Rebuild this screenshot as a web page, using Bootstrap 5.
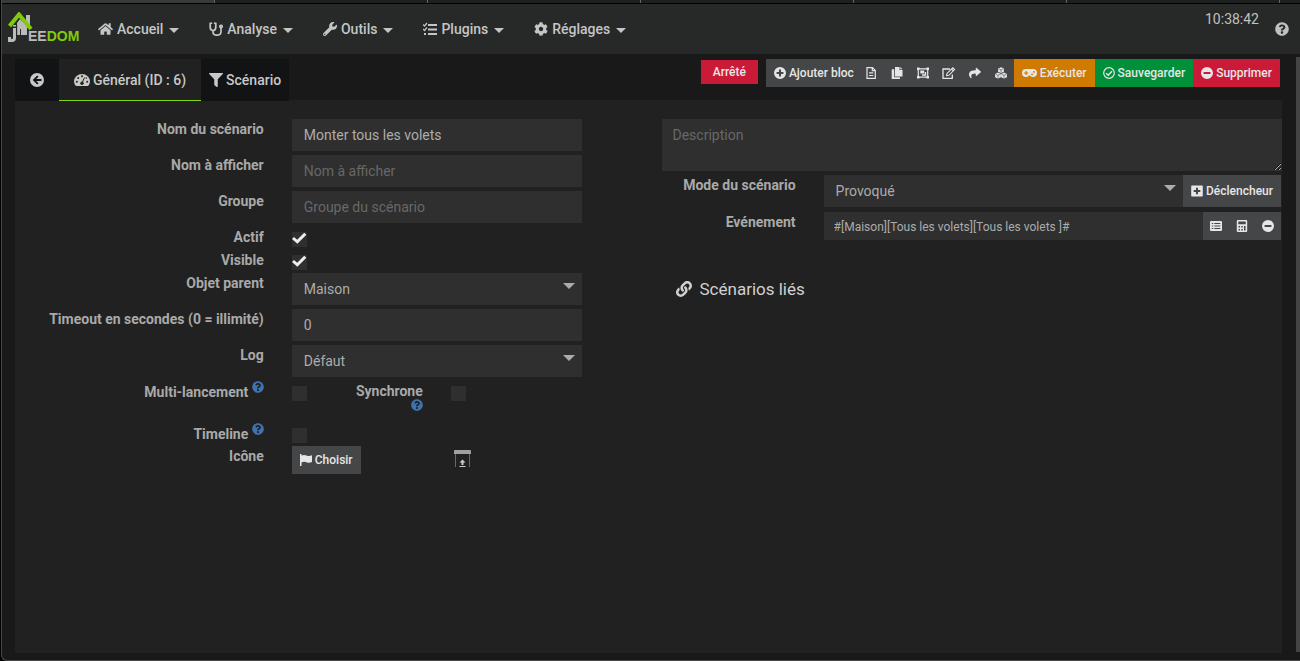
<!DOCTYPE html>
<html lang="fr">
<head>
<meta charset="utf-8">
<meta name="viewport" content="width=device-width, initial-scale=1">
<title>Jeedom - Scénario</title>
<link href="https://cdn.jsdelivr.net/npm/bootstrap@5.3.0/dist/css/bootstrap.min.css" rel="stylesheet">
<style>
body{background:#000;color:#c0c0c0;font-family:Roboto,"Liberation Sans",sans-serif;font-size:14px;line-height:20px;font-weight:500}
svg{fill:currentColor;flex:none}
.ic{width:14px;height:14px}
.ic12{width:12px;height:12px}
.stroke{fill:none;stroke:currentColor}
.window{min-height:100vh;background:#191919;border-left:1px solid #484848;border-bottom:1px solid #484848;border-bottom-left-radius:6px;margin-left:1px}
.strip{height:4px;background:#1e2020;border-bottom:1px solid #000}
.strip span{width:213px;border-right:1px solid #666;flex:none}
.strip span:first-child{background:#383a3a}
.topbar{height:50px;background:#272928;padding:0 11px 0 6px}
.topbar .nav-link{color:#c5c5c5;padding:0 15px;gap:4px;font-size:14px;font-weight:500}
.topbar .nav-link::after{margin-left:2px;margin-top:2px;border-top:5px solid;border-left:5px solid transparent;border-right:5px solid transparent;vertical-align:0}
.clock{font-size:14px;font-weight:400;padding-bottom:20px}
.page-main{padding:5px 18px 7px 13px}
.tabs-row{height:41px;padding-right:2px}
.tabs-row .nav-link{height:42px;background:#111315;color:#c8c8c8;border-radius:0;padding:0 8px;gap:3px;position:relative;z-index:1;font-size:14px;font-weight:500}
.tabs-row .nav-link.active{background:#212121;border-bottom:1px solid #84d41c;padding:0 15px}
.tabs-row .back{padding:0 15px}
.btn{--bs-btn-font-size:12px;--bs-btn-line-height:20px;--bs-btn-font-weight:500;--bs-btn-border-radius:0;--bs-btn-border-width:0;--bs-btn-color:#e6e6e6;--bs-btn-padding-x:8px;--bs-btn-padding-y:4px;--bs-btn-bg:#454648;display:inline-flex;align-items:center;gap:3px;white-space:nowrap}
.btn.add{padding-right:4px}
.btn-tool{width:26px;height:28px;padding:0;justify-content:center;flex:none}
.bg-run{background:#cf7a00}.bg-save{background:#00903a}.bg-del{background:#cb1a37}
.state{background:#cb1a37;color:#e8e8e8;font-size:12px;font-weight:500;line-height:24px;width:57px;height:24px;margin-top:1px}
.panel{background:#212121;padding-top:19px}
.half-l{width:50%;padding-right:67px}
.half-r{width:50%;padding-left:13px}
.line-l,.line-r{display:grid;column-gap:28px;margin-bottom:4px}
.line-l{grid-template-columns:249fr 290fr}
.line-r{grid-template-columns:134fr 457fr;padding-right:1px;margin-bottom:5px}
.line-l>label,.line-l>.lab,.line-r>label,.line-r>.lab,.sync label{text-align:right;font-weight:700;color:#a9a9a9}
.line-check{height:19px}
.line-tall{height:38px}
.field{background-color:#2f2f2f;border:0;border-radius:0;color:#acacac;font-size:14px;line-height:20px;font-weight:400;padding:6px 12px;height:32px;width:100%;outline:0}
.field::placeholder{color:#686868;opacity:1}
select.field{appearance:none}
.pick{position:relative;flex:1}
.pick::after{content:"";position:absolute;right:7px;top:10px;border-top:6px solid #acacac;border-left:6px solid transparent;border-right:6px solid transparent;pointer-events:none}
textarea.field{height:52px;padding:6px 11px;display:block;margin-bottom:4px;resize:vertical}
.tick{appearance:none;width:15px;height:15px;background:#2f2f2f;margin:5px 0 0;display:block;flex:none}
.tick:checked{background:#2f2f2f url("data:image/svg+xml,%3Csvg xmlns='http://www.w3.org/2000/svg' viewBox='0 0 15 15'%3E%3Cpath d='M1 6L5.3 9.8L13.3 1.800' fill='none' stroke='%23eee' stroke-width='3'/%3E%3C/svg%3E")}
.hint{color:#3f73ae;width:12px;height:12px;vertical-align:4px}
.sync label{width:67px;margin-left:49px;margin-right:28px}
.sync .hint{display:block;margin:-2px 0 0 auto}
.choose{width:180px}
.event{font-size:12px;height:28px;padding:5px 10px 3px}
.linked{font-size:17px;font-weight:400;color:#d0d0d0;margin:39px 0 0 14px;gap:8px}
.scroller{position:fixed;right:0;top:57px;bottom:9px;width:4px;background:#444}
</style>
</head>
<body>
<svg class="d-none">
<symbol id="help" viewBox="0 0 512 512"><path d="M504 256c0 136.997-111.043 248-248 248S8 392.997 8 256C8 119.083 119.043 8 256 8s248 111.083 248 248zM262.655 90c-54.497 0-89.255 22.957-116.549 63.758-3.536 5.286-2.353 12.415 2.715 16.258l34.699 26.31c5.205 3.947 12.621 3.008 16.665-2.122 17.864-22.658 30.113-35.797 57.303-35.797 20.429 0 45.698 13.148 45.698 32.958 0 14.976-12.363 22.667-32.534 33.976C247.128 238.528 216 254.941 216 296v4c0 6.627 5.373 12 12 12h56c6.627 0 12-5.373 12-12v-1.333c0-28.462 83.186-29.647 83.186-106.667 0-58.002-60.165-102-116.531-102zM256 338c-25.365 0-46 20.635-46 46 0 25.364 20.635 46 46 46s46-20.636 46-46c0-25.364-20.635-46-46-46z"/></symbol>
<symbol id="minus" viewBox="0 0 14 14"><path fill-rule="evenodd" d="M7 0a7 7 0 1 0 0 14A7 7 0 0 0 7 0zM3 5.700h8v2.600H3z"/></symbol>
</svg>
<div class="window d-flex flex-column">
  <div class="strip d-flex overflow-hidden"><span></span><span></span><span></span><span></span><span></span><span></span></div>
  <header class="topbar d-flex align-items-center">
    <a href="#" aria-label="Jeedom" class="d-flex">
      <svg width="75" height="34" viewBox="0 0 75 34"><path d="M18 3h4v10h-4zM9 11l3-4 7 7v9H9z" fill="#bababa"/><path d="M6.500 16v10q0 2.500-2.500 2.500H1.500V25" fill="none" stroke="#bababa" stroke-width="3"/><path d="M8.700 13v12M12.500 17v6" stroke="#272928" stroke-width="1"/><path d="M5 13h3v1.500H5z" fill="#bababa"/><path d="M1.500 14L11 2.500 23 17" fill="none" stroke="#80cc0c" stroke-width="4"/><text x="20" y="29" font-family="Liberation Sans" font-size="14" font-weight="700" fill="#bababa">EE<tspan fill="#80cc0c">DOM</tspan></text></svg>
    </a>
    <nav class="nav">
      <a class="nav-link dropdown-toggle d-flex align-items-center" href="#"><svg width="15" height="14" viewBox="0 0 576 512"><path d="M280.37 148.26L96 300.11V464a16 16 0 0 0 16 16l112.06-.29a16 16 0 0 0 15.92-16V368a16 16 0 0 1 16-16h64a16 16 0 0 1 16 16v95.64a16 16 0 0 0 16 16.05L464 480a16 16 0 0 0 16-16V300L295.67 148.26a12.19 12.19 0 0 0-15.3 0zM571.6 251.47L488 182.56V44.05a12 12 0 0 0-12-12h-56a12 12 0 0 0-12 12v72.61L318.47 43a48 48 0 0 0-61 0L4.34 251.47a12 12 0 0 0-1.6 16.9l25.5 31A12 12 0 0 0 45.15 301l235.22-193.74a12.19 12.19 0 0 1 15.3 0L530.9 301a12 12 0 0 0 16.9-1.6l25.5-31a12 12 0 0 0-1.7-16.93z"/></svg>Accueil</a>
      <a class="nav-link dropdown-toggle d-flex align-items-center" href="#"><svg class="ic stroke" viewBox="0 0 14 14" stroke-width="1.700"><path d="M3.200 1L1.200 1.500V5q0 3.500 2.800 3.500T6.800 5V1.500L5 1M4 8.500V10q0 3.200 3.900 3.200T12 10V6"/><circle cx="12" cy="4.500" r="1.200"/></svg>Analyse</a>
      <a class="nav-link dropdown-toggle d-flex align-items-center" href="#"><svg class="ic" viewBox="0 0 512 512"><path d="M507.73 109.1c-2.24-9.03-13.54-12.09-20.12-5.51l-74.36 74.36-67.88-11.31-11.31-67.88 74.36-74.36c6.62-6.62 3.43-17.9-5.66-20.16-47.38-11.74-99.55.91-136.58 37.93-39.64 39.64-50.55 97.1-34.05 147.2L18.74 402.76c-24.99 24.99-24.99 65.51 0 90.5 24.99 24.99 65.51 24.99 90.5 0l213.21-213.21c50.12 16.71 107.47 5.68 147.37-34.22 37.07-37.07 49.7-89.32 37.91-136.73zM64 472c-13.25 0-24-10.75-24-24 0-13.26 10.75-24 24-24s24 10.74 24 24c0 13.25-10.75 24-24 24z"/></svg>Outils</a>
      <a class="nav-link dropdown-toggle d-flex align-items-center" href="#"><svg class="ic" viewBox="0 0 14 14"><path d="M5 2h9v2H5zM5 6.500h9v2H5zM5 11h9v2H5zM1 11h2v2H1z"/><path class="stroke" d="M0 2.500L1.500 4 4 1M0 7L1.500 8.500 4 5.500" stroke-width="1.200"/></svg>Plugins</a>
      <a class="nav-link dropdown-toggle d-flex align-items-center" href="#"><svg class="ic" viewBox="0 0 512 512"><path d="M487.4 315.7l-42.6-24.6c4.3-23.2 4.3-47 0-70.2l42.6-24.6c4.9-2.8 7.1-8.6 5.5-14-11.1-35.6-30-67.8-54.7-94.6-3.8-4.1-10-5.1-14.8-2.3L380.8 110c-17.9-15.4-38.5-27.3-60.8-35.1V25.8c0-5.6-3.9-10.5-9.4-11.7-36.7-8.2-74.3-7.8-109.2 0-5.5 1.2-9.4 6.1-9.4 11.7V75c-22.2 7.9-42.8 19.8-60.8 35.1L88.7 85.5c-4.9-2.8-11-1.9-14.8 2.3-24.7 26.7-43.6 58.9-54.7 94.6-1.7 5.4.6 11.2 5.5 14L67.3 221c-4.3 23.2-4.3 47 0 70.2l-42.6 24.6c-4.9 2.8-7.1 8.6-5.5 14 11.1 35.6 30 67.8 54.7 94.6 3.8 4.1 10 5.1 14.8 2.3l42.6-24.6c17.9 15.4 38.5 27.3 60.8 35.1v49.2c0 5.6 3.9 10.5 9.4 11.7 36.7 8.2 74.3 7.8 109.2 0 5.5-1.2 9.4-6.1 9.4-11.7v-49.2c22.2-7.9 42.8-19.8 60.8-35.1l42.6 24.6c4.9 2.8 11 1.9 14.8-2.3 24.7-26.7 43.6-58.9 54.7-94.6 1.5-5.5-.7-11.3-5.6-14.1zM256 336c-44.1 0-80-35.9-80-80s35.9-80 80-80 80 35.9 80 80-35.9 80-80 80z"/></svg>Réglages</a>
    </nav>
    <div class="ms-auto d-flex align-items-center gap-3"><span class="clock">10:38:42</span><a href="#" class="text-reset d-flex" aria-label="Aide"><svg class="ic"><use href="#help"/></svg></a></div>
  </header>
  <main class="page-main d-flex flex-column flex-grow-1">
    <div class="tabs-row d-flex justify-content-between">
      <nav class="nav flex-nowrap">
        <a class="nav-link back d-flex align-items-center" href="#" aria-label="Retour"><svg class="ic" viewBox="0 0 14 14"><path fill-rule="evenodd" d="M7 0a7 7 0 1 0 0 14A7 7 0 0 0 7 0zM7.200 2.500L8.500 3.800 6.300 6H11.500V8H6.300L8.500 10.200 7.200 11.500 2.700 7z"/></svg></a>
        <a class="nav-link active d-flex align-items-center" href="#"><svg width="16" height="14" viewBox="0 0 16 14"><path d="M2 13Q0 11 0 8.500a8 7.500 0 0 1 16 0Q16 11 14 13z"/><g fill="#212121"><circle cx="2.800" cy="8.800" r="1"/><circle cx="4.200" cy="5" r="1"/><circle cx="8" cy="3.300" r="1"/><circle cx="13.200" cy="8.800" r="1"/><circle cx="12.300" cy="5" r=".8"/><circle cx="8" cy="10.300" r="1.700"/></g><path class="stroke" d="M8 10L10.500 4.500" style="stroke:#212121"/></svg>Général (ID : 6)</a>
        <a class="nav-link d-flex align-items-center" href="#"><svg class="ic" viewBox="0 0 512 512"><path d="M487.976 0H24.028C2.71 0-8.047 25.866 7.058 40.971L192 225.941V432c0 7.831 3.821 15.17 10.237 19.662l80 55.98C298.02 518.69 320 507.493 320 487.98V225.941l184.947-184.97C520.021 25.896 509.338 0 487.976 0z"/></svg>Scénario</a>
      </nav>
      <div class="d-flex align-items-start gap-2">
        <span class="state text-center">Arrêté</span>
        <div class="d-flex">
          <button class="btn add"><svg class="ic12" viewBox="0 0 14 14"><path fill-rule="evenodd" d="M7 0a7 7 0 1 0 0 14A7 7 0 0 0 7 0zM5.800 3h2.400v2.800H11v2.400H8.200V11H5.800V8.200H3V5.800h2.800z"/></svg>Ajouter bloc</button>
          <button class="btn btn-tool" aria-label="Log"><svg class="ic12 stroke" viewBox="0 0 12 12"><path d="M2 .6h5.500L10.300 3.400V11.400H2zM7.300.6v3h3M4 5.800h4.300M4 8.500h4.300" stroke-width="1.200"/></svg></button>
          <button class="btn btn-tool" aria-label="Copier"><svg class="ic12" viewBox="0 0 12 12"><path d="M4 0h4.500v3H11.500v6.500H4zM9.200 0l2.300 2.300H9.200zM.7 2.300H3.200v8H9V12H.7z"/></svg></button>
          <button class="btn btn-tool" aria-label="Template"><svg class="ic12" viewBox="0 0 12 12"><path d="M0 .5h2.500V3H0zM9.500.5H12V3H9.500zM0 9h2.500v2.500H0zM9.500 9H12v2.500H9.500z"/><path class="stroke" d="M1.300 1.800h9.400v8.400H1.300z" stroke-width="1.200"/><path d="M3.300 3.500h3.900v3H3.300zM7.800 5h1.400v3.700H5V7.200h2.800z"/></svg></button>
          <button class="btn btn-tool" aria-label="Éditer"><svg width="14" height="12" viewBox="0 0 14 12"><path class="stroke" d="M8 2H1v9.300h9.300V7.500" stroke-width="1.300"/><path class="stroke" d="M4.600 8.600l.4-2.200L10.800.8l1.800 1.800L6.800 8.300zM9.500 2l1.800 1.800" stroke-width="1.100"/></svg></button>
          <button class="btn btn-tool" aria-label="Partager"><svg class="ic12" viewBox="0 0 512 512"><path d="M503.691 189.836L327.687 37.851C312.281 24.546 288 35.347 288 56.015v80.053C127.371 137.907 0 170.1 0 322.326c0 61.441 39.581 122.309 83.333 154.132 13.653 9.931 33.111-2.533 28.077-18.631C66.066 312.814 132.917 274.316 288 272.085V360c0 20.7 24.3 31.453 39.687 18.164l176.004-152c11.071-9.562 11.086-26.753 0-36.328z"/></svg></button>
          <button class="btn btn-tool" aria-label="Liens"><svg class="ic12" viewBox="0 0 12 12"><g id="cube"><path d="M6 .2L8.900 1.500V4.800L6 6.100 3.100 4.800V1.500z"/><path d="M3.700 1.900L6 2.900 8.300 1.900M6 2.900V5.500" fill="none" stroke="#454648" stroke-width=".6"/></g><use href="#cube" x="-3" y="5.400"/><use href="#cube" x="3" y="5.400"/></svg></button>
          <button class="btn bg-run"><svg width="15" height="12" viewBox="0 0 15 12"><path fill-rule="evenodd" d="M4 2h7a4 4 0 0 1 0 8q-2 0-3-1.500H7Q6 10 4 10a4 4 0 0 1 0-8zM3.500 4v1.400H2v1.200h1.500V8h1.200V6.600h1.500V5.400H4.700V4zM10 6.500a.9.9 0 1 0 .1 0zM12 4a.9.900 0 1 0 .1 0z"/></svg>Exécuter</button>
          <button class="btn bg-save"><svg class="ic12 stroke" viewBox="0 0 12 12"><circle cx="6" cy="6" r="5.300" stroke-width="1.200"/><path d="M3.200 6.200L5.200 8.200 9 4.300" stroke-width="1.400"/></svg>Sauvegarder</button>
          <button class="btn bg-del"><svg class="ic12"><use href="#minus"/></svg>Supprimer</button>
        </div>
      </div>
    </div>
    <form class="panel d-flex flex-grow-1">
      <div class="half-l">
        <div class="line-l"><label for="nom">Nom du scénario</label><input class="field" id="nom" value="Monter tous les volets"></div>
        <div class="line-l"><label for="aff">Nom à afficher</label><input class="field" id="aff" placeholder="Nom à afficher"></div>
        <div class="line-l"><label for="grp">Groupe</label><input class="field" id="grp" placeholder="Groupe du scénario"></div>
        <div class="line-l line-check"><label for="act">Actif</label><input class="tick" type="checkbox" id="act" checked></div>
        <div class="line-l line-check"><label for="vis">Visible</label><input class="tick" type="checkbox" id="vis" checked></div>
        <div class="line-l"><label for="obj">Objet parent</label><div class="pick"><select class="field" id="obj"><option>Maison</option></select></div></div>
        <div class="line-l"><label for="tmo">Timeout en secondes (0 = illimité)</label><input class="field" id="tmo" value="0"></div>
        <div class="line-l"><label for="log">Log</label><div class="pick"><select class="field" id="log"><option>Défaut</option></select></div></div>
        <div class="line-l line-tall"><label for="mul">Multi-lancement <svg class="hint"><use href="#help"/></svg></label><div class="d-flex sync"><input class="tick" type="checkbox" id="mul"><label for="syn">Synchrone<svg class="hint"><use href="#help"/></svg></label><input class="tick" type="checkbox" id="syn"></div></div>
        <div class="line-l line-check"><label for="tim">Timeline <svg class="hint"><use href="#help"/></svg></label><input class="tick" type="checkbox" id="tim"></div>
        <div class="line-l"><span class="lab">Icône</span><div class="d-flex choose"><button type="button" class="btn"><svg class="ic12" viewBox="0 0 12 12"><path d="M0 0h1.500v12H0zM1.500 1.500Q4 .3 6.500 1.500T12 1.300V8Q9 9.500 6.500 8.300T1.500 8.500z"/></svg>Choisir</button>
          <svg class="ms-auto mt-1" width="18" height="18" viewBox="0 0 18 18"><path d="M1 0h15q1 0 1 1v3H0V1q0-1 1-1z" fill="#a0a0a0"/><path d="M1.500 4v13M15.500 4v13" stroke="#686868"/><path d="M8.500 9.500l3 3H9.500V15h-2v-2.500h-2zM5.500 16h6v1h-6z" fill="#ccc"/></svg></div></div>
      </div>
      <div class="half-r">
        <textarea class="field" placeholder="Description" aria-label="Description"></textarea>
        <div class="line-r"><label for="mode">Mode du scénario</label><div class="d-flex"><div class="pick"><select class="field" id="mode"><option>Provoqué</option></select></div><button type="button" class="btn"><svg class="ic12" viewBox="0 0 12 12"><path fill-rule="evenodd" d="M1 .5h10q.8 0 .8.8v9.400q0 .8-.8.8H1q-.8 0-.8-.8V1.300Q.2.500 1 .500zM5 2.800v2.200H2.700v2H5v2.200h2V7h2.300V5H7V2.800z"/></svg>Déclencheur</button></div></div>
        <div class="line-r"><label for="evt">Evénement</label><div class="d-flex"><input class="field event" id="evt" value="#[Maison][Tous les volets][Tous les volets ]#"><button type="button" class="btn btn-tool" aria-label="Commande"><svg class="ic12" viewBox="0 0 12 12"><path d="M1 1h10q1 0 1 1v8q0 1-1 1H1q-1 0-1-1V2q0-1 1-1z"/><path d="M1.800 3.500h1.400M1.800 6h1.400M1.800 8.500h1.400M4.300 3.500h6M4.300 6h6M4.300 8.500h6" stroke="#454648" stroke-width="1.200"/></svg></button><button type="button" class="btn btn-tool" aria-label="Calcul"><svg class="ic12" viewBox="0 0 12 12"><path d="M1.800 0h8.400q1 0 1 1v10q0 1-1 1H1.800q-1 0-1-1V1q0-1 1-1z"/><path d="M2.300 1.500h7.400v2.700H2.300zM2.500 6h1.500v1.500H2.500zM5.300 6h1.500v1.500H5.300zM8 6h1.500v4.500H8zM2.500 9h1.500v1.500H2.500zM5.300 9h1.500v1.500H5.300z" fill="#454648"/></svg></button><button type="button" class="btn btn-tool" aria-label="Retirer"><svg class="ic12"><use href="#minus"/></svg></button></div></div>
        <h2 class="linked d-flex align-items-center"><svg width="16" height="16" viewBox="0 0 512 512"><path d="M326.612 185.391c59.747 59.809 58.927 155.698.36 214.59-.11.12-.24.25-.36.37l-67.2 67.2c-59.27 59.27-155.699 59.262-214.96 0-59.27-59.26-59.27-155.7 0-214.96l37.106-37.106c9.84-9.84 26.786-3.3 27.294 10.606.648 17.722 3.826 35.527 9.69 52.721 1.986 5.822.567 12.262-3.783 16.612l-13.087 13.087c-28.026 28.026-28.905 73.66-1.155 101.96 28.024 28.579 74.086 28.749 102.325.51l67.2-67.19c28.191-28.191 28.073-73.757 0-101.83-3.701-3.694-7.429-6.564-10.341-8.569a16.037 16.037 0 0 1-6.947-12.606c-.396-10.567 3.348-21.456 11.698-29.806l21.054-21.055c5.521-5.521 14.182-6.199 20.584-1.731a152.482 152.482 0 0 1 20.522 17.197zM467.547 44.449c-59.261-59.262-155.69-59.27-214.96 0l-67.2 67.2c-.12.12-.25.25-.36.37-58.566 58.892-59.387 154.781.36 214.59a152.454 152.454 0 0 0 20.521 17.196c6.402 4.468 15.064 3.789 20.584-1.731l21.054-21.055c8.35-8.35 12.094-19.239 11.698-29.806a16.037 16.037 0 0 0-6.947-12.606c-2.912-2.005-6.64-4.875-10.341-8.569-28.073-28.073-28.191-73.639 0-101.83l67.2-67.19c28.239-28.239 74.3-28.069 102.325.51 27.75 28.3 26.872 73.934-1.155 101.96l-13.087 13.087c-4.35 4.35-5.769 10.79-3.783 16.612 5.864 17.194 9.042 34.999 9.69 52.721.509 13.906 17.454 20.446 27.294 10.606l37.106-37.106c59.271-59.259 59.271-155.699.001-214.959z"/></svg>Scénarios liés</h2>
      </div>
    </form>
  </main>
</div>
<div class="scroller"></div>
<script src="https://cdn.jsdelivr.net/npm/bootstrap@5.3.0/dist/js/bootstrap.bundle.min.js"></script>
</body>
</html>
